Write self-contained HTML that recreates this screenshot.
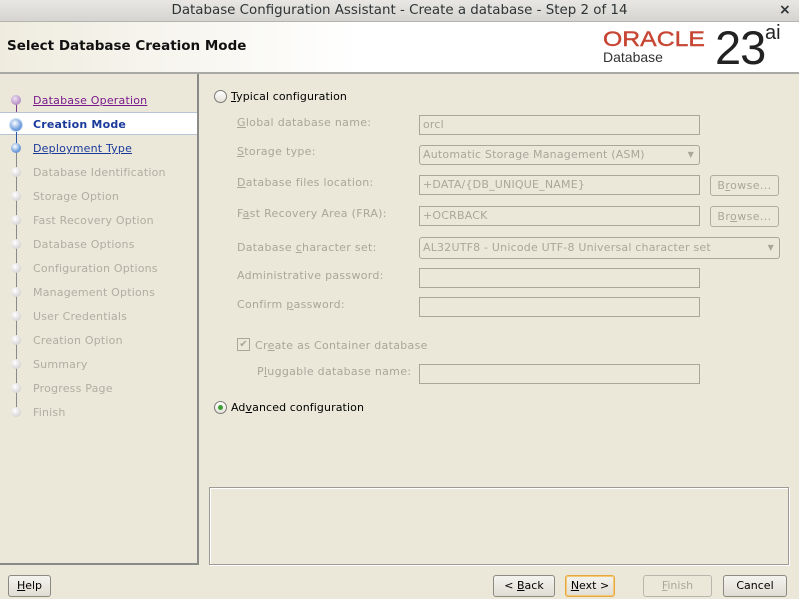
<!DOCTYPE html>
<html><head><meta charset="utf-8"><style>
*{margin:0;padding:0;box-sizing:border-box}
body{width:799px;height:599px;overflow:hidden;background:#ebe8da;font-family:"DejaVu Sans","Liberation Sans",sans-serif;font-size:11px;color:#000;position:relative}
.a{position:absolute;white-space:nowrap}
.title{left:0;top:0;width:799px;height:22px;background:linear-gradient(#e8e7e5,#d6d4d0);border-bottom:1px solid #b5b3ae;text-align:center;font-size:13.4px;line-height:22px;color:#2e3436}
.hdr{left:0;top:22px;width:799px;height:52px;background:linear-gradient(90deg,#efecdf,#fff 45%,#fff);border-bottom:2px solid #a8a8a4}
.lp{left:0;top:74px;width:199px;height:491px;border-right:2px solid #8a8a88;border-bottom:2px solid #8a8a88}
.nav{left:33px;font-size:11px;color:#b0ada2;letter-spacing:.2px}
.dot{left:11px;width:10px;height:10px;border-radius:50%;background:radial-gradient(circle at 40% 35%,#fff,#ddd 60%,#bbb)}
.lbl{left:237px;color:#a9a69a;letter-spacing:.3px}
.inp{left:419px;width:281px;height:20px;border:1px solid #a9a69a;color:#a9a69a;padding-left:3px;line-height:18px;letter-spacing:.2px}
.br{left:710px;width:69px;height:21px;border:1px solid #b0ad9f;border-radius:3px;color:#a9a69a;text-align:center;line-height:19px;letter-spacing:.4px}
.btn{top:575px;height:22px;border:1px solid #8a8982;border-radius:3px;background:linear-gradient(#f4f3ee,#e0ddd3);text-align:center;line-height:20px;font-size:11px}
u{text-decoration:underline}
</style></head><body>
<div class="a title">Database Configuration Assistant - Create a database - Step 2 of 14</div>
<div class="a" style="left:779px;top:2px;font-size:14px;font-weight:bold;color:#2e3436">×</div>
<div class="a hdr"></div>
<div class="a" style="left:7px;top:38px;font-size:13.5px;font-weight:bold;color:#111">Select Database Creation Mode</div>
<div class="a" style="left:603px;top:28px;font-size:21px;color:#c74634;font-family:'Liberation Sans',sans-serif;transform:scaleX(1.18);transform-origin:left;-webkit-text-stroke:0.4px #c74634">ORACLE</div>
<div class="a" style="left:603px;top:49px;font-size:14px;color:#333;font-family:'Liberation Sans',sans-serif">Database</div>
<div class="a" style="left:715px;top:20px;font-size:47px;color:#222;font-family:'Liberation Sans',sans-serif;letter-spacing:-1px;line-height:56px">23</div>
<div class="a" style="left:765px;top:22px;font-size:20px;color:#222;font-family:'Liberation Sans',sans-serif">ai</div>
<div class="a lp"></div>
<div class="a" style="left:0;top:112px;width:197px;height:23px;background:#fff;border-top:1px solid #b8c4d6;border-bottom:1px solid #b8c4d6"></div>
<div class="a" style="left:16px;top:100px;width:1px;height:12px;background:#7a3a8a"></div>
<div class="a" style="left:16px;top:124px;width:1px;height:24px;background:#2a55a8"></div>
<div class="a" style="left:16px;top:148px;width:1px;height:264px;background:#8a8a88"></div>
<div class="a dot" style="top:95px;background:radial-gradient(circle at 40% 35%,#f0e0f4,#b58cc4 70%)"></div>
<div class="a dot" style="top:119px;width:12px;height:12px;left:10px;background:radial-gradient(circle at 40% 35%,#fff,#7aa6e0 55%,#3b6fc0);box-shadow:0 0 0 1px #cfe0f5"></div>
<div class="a dot" style="top:143px;background:radial-gradient(circle at 40% 35%,#fff,#7aa6e0 55%,#3b6fc0)"></div>
<div class="a nav" style="top:94px;color:#7a1b8a"><u>Database Operation</u></div>
<div class="a nav" style="top:118px;color:#1a3a9a;font-weight:bold">Creation Mode</div>
<div class="a nav" style="top:142px;color:#1a3a9a"><u>Deployment Type</u></div>
<div class="a dot" style="top:167px"></div><div class="a nav" style="top:166px">Database Identification</div>
<div class="a dot" style="top:191px"></div><div class="a nav" style="top:190px">Storage Option</div>
<div class="a dot" style="top:215px"></div><div class="a nav" style="top:214px">Fast Recovery Option</div>
<div class="a dot" style="top:239px"></div><div class="a nav" style="top:238px">Database Options</div>
<div class="a dot" style="top:263px"></div><div class="a nav" style="top:262px">Configuration Options</div>
<div class="a dot" style="top:287px"></div><div class="a nav" style="top:286px">Management Options</div>
<div class="a dot" style="top:311px"></div><div class="a nav" style="top:310px">User Credentials</div>
<div class="a dot" style="top:335px"></div><div class="a nav" style="top:334px">Creation Option</div>
<div class="a dot" style="top:359px"></div><div class="a nav" style="top:358px">Summary</div>
<div class="a dot" style="top:383px"></div><div class="a nav" style="top:382px">Progress Page</div>
<div class="a dot" style="top:407px"></div><div class="a nav" style="top:406px">Finish</div>

<div class="a" style="left:214px;top:90px;width:13px;height:13px;border:1px solid #7a7a76;border-radius:50%;background:linear-gradient(#fff,#e4e2da)"></div>
<div class="a" style="left:231px;top:90px;letter-spacing:.1px"><u>T</u>ypical configuration</div>
<div class="a lbl" style="top:116px"><u>G</u>lobal database name:</div>
<div class="a inp" style="top:115px">orcl</div>
<div class="a lbl" style="top:145px"><u>S</u>torage type:</div>
<div class="a inp" style="top:145px;border-radius:3px">Automatic Storage Management (ASM)<span style="position:absolute;right:5px;top:0;font-size:8px">▼</span></div>
<div class="a lbl" style="top:176px"><u>D</u>atabase files location:</div>
<div class="a inp" style="top:175px">+DATA/{DB_UNIQUE_NAME}</div>
<div class="a br" style="top:175px">B<u>r</u>owse...</div>
<div class="a lbl" style="top:207px">F<u>a</u>st Recovery Area (FRA):</div>
<div class="a inp" style="top:206px">+OCRBACK</div>
<div class="a br" style="top:206px">Br<u>o</u>wse...</div>
<div class="a lbl" style="top:241px">Database <u>c</u>haracter set:</div>
<div class="a inp" style="top:237px;width:361px;height:22px;border-radius:3px;line-height:20px">AL32UTF8 - Unicode UTF-8 Universal character set<span style="position:absolute;right:5px;top:0;font-size:8px">▼</span></div>
<div class="a lbl" style="top:269px">Administrative password:</div>
<div class="a inp" style="top:268px"></div>
<div class="a lbl" style="top:298px">Confirm <u>p</u>assword:</div>
<div class="a inp" style="top:297px"></div>
<div class="a" style="left:237px;top:338px;width:13px;height:13px;border:1px solid #a9a69a;font-size:10px;color:#a9a69a;line-height:11px;text-align:center">✔</div>
<div class="a lbl" style="left:255px;top:339px">Cr<u>e</u>ate as Container database</div>
<div class="a lbl" style="left:257px;top:365px">P<u>l</u>uggable database name:</div>
<div class="a inp" style="top:364px"></div>
<div class="a" style="left:214px;top:401px;width:13px;height:13px;border:1px solid #7a7a76;border-radius:50%;background:linear-gradient(#fff,#e4e2da)"><div style="position:absolute;left:3px;top:3px;width:5px;height:5px;border-radius:50%;background:#3aa035"></div></div>
<div class="a" style="left:231px;top:401px;letter-spacing:.1px">Ad<u>v</u>anced configuration</div>

<div class="a" style="left:209px;top:487px;width:580px;height:78px;border:1px solid #9c9b95;box-shadow:inset 1px 1px 0 #fff,1px 1px 0 #fff"></div>

<div class="a btn" style="left:8px;width:43px"><u>H</u>elp</div>
<div class="a btn" style="left:493px;width:62px">&lt; <u>B</u>ack</div>
<div class="a btn" style="left:565px;width:50px;border:1px solid #e8a93c;box-shadow:inset 0 0 0 1px #f4c97a"><u>N</u>ext &gt;</div>
<div class="a btn" style="left:643px;width:69px;color:#aaa79b;border-color:#b8b6ad;background:#ebe8da"><u>F</u>inish</div>
<div class="a btn" style="left:723px;width:64px">Cancel</div>
</body></html>
